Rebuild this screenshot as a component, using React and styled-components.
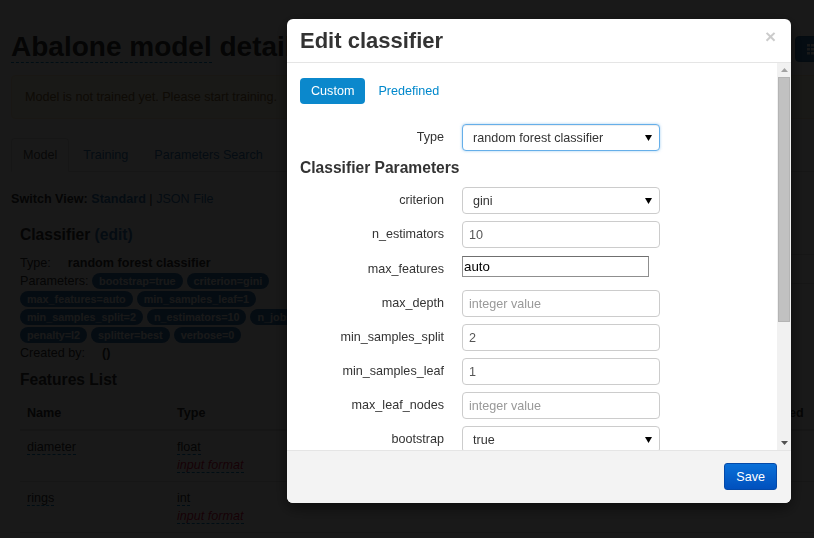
import React from "react";
import styled, { createGlobalStyle } from "styled-components";

const GlobalStyle = createGlobalStyle`
  * { box-sizing: border-box; }
  html, body {
    margin: 0;
    padding: 0;
    width: 814px;
    height: 538px;
    overflow: hidden;
    background: #fff;
  }
  body {
    font-family: "Liberation Sans", Arial, sans-serif;
    font-size: 12.6px;
    line-height: 18px;
    color: #333;
  }
`;

const params = [
  "bootstrap=true",
  "criterion=gini",
  "max_features=auto",
  "min_samples_leaf=1",
  "min_samples_split=2",
  "n_estimators=10",
  "n_jobs=1",
  "penalty=l2",
  "splitter=best",
  "verbose=0",
];

const features = [
  { name: "diameter", type: "float" },
  { name: "rings", type: "int" },
  { name: "length", type: "float" },
];

const fields = [
  { label: "criterion", kind: "select", value: "gini" },
  { label: "n_estimators", kind: "input", value: "10" },
  { label: "max_features", kind: "plain", value: "auto" },
  { label: "max_depth", kind: "input", placeholder: "integer value" },
  { label: "min_samples_split", kind: "input", value: "2" },
  { label: "min_samples_leaf", kind: "input", value: "1" },
  { label: "max_leaf_nodes", kind: "input", placeholder: "integer value" },
  { label: "bootstrap", kind: "select", value: "true" },
  { label: "oob_score", kind: "select", value: "false" },
];

export default function App() {
  return (
    <>
      <GlobalStyle />
      <Page>
        <Header>
          <Title>
            <Editable>Abalone model</Editable> details
          </Title>
          <TopButton>
            <svg width="12" height="12" viewBox="0 0 12 12">
              <rect x="0" y="1" width="3" height="2.5" fill="#fff" />
              <rect x="4" y="1" width="8" height="2.5" fill="#fff" />
              <rect x="0" y="5" width="3" height="2.5" fill="#fff" />
              <rect x="4" y="5" width="8" height="2.5" fill="#fff" />
              <rect x="0" y="9" width="3" height="2.5" fill="#fff" />
              <rect x="4" y="9" width="8" height="2.5" fill="#fff" />
            </svg>
            Train
          </TopButton>
        </Header>
        <Alert>Model is not trained yet. Please start training.</Alert>
        <Tabs>
          <Tab $active>Model</Tab>
          <Tab>Training</Tab>
          <Tab>Parameters Search</Tab>
        </Tabs>
        <SwitchView>
          <b>Switch View:</b> <Link $bold>Standard</Link> | <Link>JSON File</Link>
        </SwitchView>
        <TabContent>
          <ClassifierRow>
            <LeftCol>
              <SectionTitle>
                Classifier <Link>(edit)</Link>
              </SectionTitle>
              <InfoLine>
                <InfoLabel>Type:</InfoLabel>
                <b>random forest classifier</b>
              </InfoLine>
              <InfoLine>
                Parameters:{" "}
                {params.map((p) => (
                  <Badge key={p}>{p}</Badge>
                ))}
              </InfoLine>
              <InfoLine>
                <InfoLabel>Created by:</InfoLabel>
                <b>()</b>
              </InfoLine>
            </LeftCol>
            <RightCol>
              <SectionTitle>Dataset</SectionTitle>
              <SideTable>
                <tbody>
                  <tr>
                    <td>Import handler</td>
                    <td>abalone</td>
                  </tr>
                  <tr>
                    <td>Status</td>
                    <td>New</td>
                  </tr>
                </tbody>
              </SideTable>
            </RightCol>
          </ClassifierRow>
          <FeaturesTitle>Features List</FeaturesTitle>
          <FeatureTable>
            <colgroup>
              <col style={{ width: 150 }} />
              <col style={{ width: 150 }} />
              <col style={{ width: 422 }} />
              <col style={{ width: 138 }} />
            </colgroup>
            <thead>
              <tr>
                <th>Name</th>
                <th>Type</th>
                <th>Transformer</th>
                <th>Required</th>
              </tr>
            </thead>
            <tbody>
              {features.map((f) => (
                <tr key={f.name}>
                  <td>
                    <Editable>{f.name}</Editable>
                  </td>
                  <td>
                    <Editable>{f.type}</Editable>
                    <br />
                    <EmptyEditable>input format</EmptyEditable>
                  </td>
                  <td></td>
                  <td>true</td>
                </tr>
              ))}
            </tbody>
          </FeatureTable>
        </TabContent>
      </Page>

      <Backdrop />
      <Modal>
        <ModalHeader>
          <ModalTitle>Edit classifier</ModalTitle>
          <Close>×</Close>
        </ModalHeader>
        <ModalBody>
          <BodyContent>
            <Pills>
              <Pill $active>Custom</Pill>
              <Pill>Predefined</Pill>
            </Pills>
            <Form>
              <FormRow>
                <Label>Type</Label>
                <Select $focus>
                  random forest classifier
                  <Caret />
                </Select>
              </FormRow>
              <ParamsTitle>Classifier Parameters</ParamsTitle>
              {fields.map((f) => (
                <FormRow key={f.label}>
                  <Label $tall={f.kind === "plain"}>{f.label}</Label>
                  {f.kind === "select" && (
                    <Select>
                      {f.value}
                      <Caret />
                    </Select>
                  )}
                  {f.kind === "input" && (
                    <Input
                      readOnly
                      defaultValue={f.value}
                      placeholder={f.placeholder}
                    />
                  )}
                  {f.kind === "plain" && (
                    <PlainInput readOnly defaultValue={f.value} />
                  )}
                </FormRow>
              ))}
            </Form>
          </BodyContent>
          <Scrollbar>
            <ScrollArrow>
              <svg width="7" height="4" viewBox="0 0 7 4">
                <polygon points="0,4 7,4 3.5,0" fill="#a3a3a3" />
              </svg>
            </ScrollArrow>
            <Thumb />
            <ScrollSpacer />
            <ScrollArrow>
              <svg width="7" height="4" viewBox="0 0 7 4">
                <polygon points="0,0 7,0 3.5,4" fill="#505050" />
              </svg>
            </ScrollArrow>
          </Scrollbar>
        </ModalBody>
        <ModalFooter>
          <SaveButton>Save</SaveButton>
        </ModalFooter>
      </Modal>
    </>
  );
}

function Caret() {
  return (
    <svg width="7" height="6" viewBox="0 0 7 6">
      <polygon points="0,0 7,0 3.5,6" fill="#000" />
    </svg>
  );
}

/* ---------- background page ---------- */

const Page = styled.div`
  width: 880px;
  padding-left: 11px;
`;

const Header = styled.div`
  display: flex;
  align-items: flex-start;
`;

const Title = styled.h1`
  flex: 0 0 784px;
  margin: 31px 0 0;
  font-size: 28px;
  line-height: 32px;
  font-weight: bold;
  color: #333;
  white-space: nowrap;
`;

const Editable = styled.span`
  border-bottom: 1px dashed #0088cc;
`;

const EmptyEditable = styled.span`
  color: #dd1144;
  font-style: italic;
  border-bottom: 1px dashed #0088cc;
`;

const TopButton = styled.div`
  margin-top: 36px;
  height: 26px;
  padding: 0 11px;
  display: flex;
  align-items: center;
  gap: 6px;
  background: #337ab7;
  border: 1px solid #2e6da4;
  border-radius: 4px;
  color: #fff;
`;

const Alert = styled.div`
  margin-top: 12px;
  padding: 12px 13px;
  background: #fcf8e3;
  border: 1px solid #faebcc;
  border-radius: 4px;
  color: #8a6d3b;
`;

const Tabs = styled.div`
  margin-top: 19px;
  display: flex;
  border-bottom: 1px solid #ddd;
`;

const Tab = styled.div`
  margin: 0 2px -1px 0;
  padding: 7px 11px;
  border: 1px solid transparent;
  border-radius: 4px 4px 0 0;
  color: ${(p) => (p.$active ? "#555" : "#337ab7")};
  ${(p) =>
    p.$active &&
    `
    background: #fff;
    border-color: #ddd #ddd transparent;
  `}
`;

const SwitchView = styled.div`
  margin-top: 18px;
`;

const Link = styled.span`
  color: #337ab7;
  font-weight: ${(p) => (p.$bold ? "bold" : "inherit")};
`;

const TabContent = styled.div`
  padding-left: 9px;
`;

const ClassifierRow = styled.div`
  display: flex;
  margin-top: 17px;
`;

const LeftCol = styled.div`
  width: 330px;
`;

const RightCol = styled.div`
  margin-left: 70px;
  flex: 1;
`;

const SectionTitle = styled.h3`
  margin: 0 0 9px;
  font-size: 15.6px;
  line-height: 20px;
  font-weight: bold;
`;

const InfoLine = styled.div`
  line-height: 18px;
`;

const InfoLabel = styled.span`
  margin-right: 17px;
`;

const Badge = styled.span`
  display: inline-block;
  margin-right: 4px;
  padding: 0 7px;
  line-height: 16px;
  font-size: 10.8px;
  font-weight: bold;
  color: #fff;
  background: #337ab7;
  border-radius: 10px;
`;

const SideTable = styled.table`
  width: 100%;
  border-collapse: collapse;
  td {
    padding: 5px 7px;
    border-top: 1px solid #ddd;
  }
`;

const FeaturesTitle = styled.h3`
  margin: 8px 0 7px;
  font-size: 15.6px;
  line-height: 20px;
  font-weight: bold;
`;

const FeatureTable = styled.table`
  width: 860px;
  border-collapse: collapse;
  table-layout: fixed;
  th {
    text-align: left;
    padding: 7px;
    border-bottom: 2px solid #ddd;
  }
  td {
    padding: 7px;
    border-top: 1px solid #ddd;
    vertical-align: top;
  }
`;

/* ---------- modal ---------- */

const Backdrop = styled.div`
  position: fixed;
  top: 0;
  left: 0;
  width: 814px;
  height: 538px;
  background: rgba(0, 0, 0, 0.9);
`;

const Modal = styled.div`
  position: fixed;
  top: 19px;
  left: 287px;
  width: 504px;
  height: 484px;
  display: flex;
  flex-direction: column;
  background: #fff;
  border-radius: 6px;
  box-shadow: 0 5px 15px rgba(0, 0, 0, 0.5);
  overflow: hidden;
`;

const ModalHeader = styled.div`
  display: flex;
  align-items: flex-start;
  padding: 10px 15px 9px 13px;
  border-bottom: 1px solid #e5e5e5;
`;

const ModalTitle = styled.h4`
  margin: 0;
  font-size: 22px;
  line-height: 24px;
  font-weight: bold;
  color: #333;
`;

const Close = styled.span`
  margin-left: auto;
  margin-top: -2px;
  font-size: 19px;
  line-height: 19px;
  font-weight: bold;
  color: #000;
  opacity: 0.2;
`;

const ModalBody = styled.div`
  height: 387px;
  display: flex;
  flex-shrink: 0;
`;

const BodyContent = styled.div`
  flex: 1;
  padding: 15px 13px;
  overflow: hidden;
`;

const Pills = styled.div`
  display: flex;
`;

const Pill = styled.div`
  margin-right: 2px;
  padding: 4px 11px;
  border-radius: 4px;
  color: ${(p) => (p.$active ? "#fff" : "#0088cc")};
  background: ${(p) => (p.$active ? "#0b88cc" : "transparent")};
`;

const Form = styled.div`
  margin-top: 20px;
  display: flex;
  flex-direction: column;
  gap: 7px;
`;

const FormRow = styled.div`
  display: grid;
  grid-template-columns: 144px 198px;
  column-gap: 18px;
  align-items: start;
`;

const Label = styled.div`
  text-align: right;
  line-height: ${(p) => (p.$tall ? "28px" : "27px")};
  color: #333;
`;

const ParamsTitle = styled.h4`
  margin: 0 0 2px;
  font-size: 15.6px;
  line-height: 20px;
  font-weight: bold;
  color: #333;
`;

const Select = styled.div`
  height: 27px;
  display: flex;
  align-items: center;
  justify-content: space-between;
  padding: 0 7px 0 10px;
  border: 1px solid ${(p) => (p.$focus ? "#66afe9" : "#ccc")};
  border-radius: 4px;
  color: #333;
  background: #fff;
  box-shadow: ${(p) =>
    p.$focus
      ? "inset 0 1px 1px rgba(0,0,0,.075), 0 0 3px rgba(102,175,233,.6)"
      : "none"};
`;

const Input = styled.input`
  width: 198px;
  height: 27px;
  margin: 0;
  padding: 0 6px;
  border: 1px solid #ccc;
  border-radius: 4px;
  font-family: "Liberation Sans", Arial, sans-serif;
  font-size: 12.6px;
  color: #555;
  outline: none;
  &::placeholder {
    color: #999;
  }
`;

const PlainInput = styled.input`
  width: 187px;
  height: 21px;
  margin: 1px 0 0;
  padding: 0 1px;
  border: 1px solid #8f8f8f;
  border-top-color: #6f6f6f;
  font-family: "Liberation Sans", Arial, sans-serif;
  font-size: 13.3px;
  color: #000;
  outline: none;
`;

const Scrollbar = styled.div`
  width: 14px;
  display: flex;
  flex-direction: column;
  background: #f1f1f1;
`;

const ScrollArrow = styled.div`
  height: 14px;
  display: flex;
  align-items: center;
  justify-content: center;
`;

const Thumb = styled.div`
  height: 245px;
  margin: 0 1px;
  background: #c1c1c1;
  border: 1px solid #b4b4b4;
`;

const ScrollSpacer = styled.div`
  flex: 1;
`;

const ModalFooter = styled.div`
  display: flex;
  justify-content: flex-end;
  padding: 12px 14px 13px;
  border-top: 1px solid #e5e5e5;
  background: #f3f3f3;
`;

const SaveButton = styled.div`
  height: 27px;
  padding: 0 11px;
  display: flex;
  align-items: center;
  color: #fff;
  background: linear-gradient(to bottom, #0a70d8, #0050bd);
  border: 1px solid #0449a8;
  border-radius: 3px;
`;
